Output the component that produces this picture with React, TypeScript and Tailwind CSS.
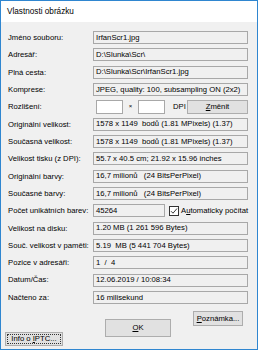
const rows: { label: string; value?: string; kind?: "res" | "count" }[] = [
  { label: "Jméno souboru:", value: "IrfanScr1.jpg" },
  { label: "Adresář:", value: "D:\\Slunka\\Scr\\" },
  { label: "Plná cesta:", value: "D:\\Slunka\\Scr\\IrfanScr1.jpg" },
  { label: "Komprese:", value: "JPEG, quality: 100, subsampling ON (2x2)" },
  { label: "Rozlišení:", kind: "res" },
  { label: "Originální velikost:", value: "1578 x 1149  bodů (1.81 MPixels) (1.37)" },
  { label: "Současná velikost:", value: "1578 x 1149  bodů (1.81 MPixels) (1.37)" },
  { label: "Velikost tisku (z DPI):", value: "55.7 x 40.5 cm; 21.92 x 15.96 inches" },
  { label: "Originální barvy:", value: "16,7 milionů   (24 BitsPerPixel)" },
  { label: "Současné barvy:", value: "16,7 milionů   (24 BitsPerPixel)" },
  { label: "Počet unikátních barev:", kind: "count" },
  { label: "Velikost na disku:", value: "1.20 MB (1 261 596 Bytes)" },
  { label: "Souč. velikost v paměti:", value: "5.19  MB (5 441 704 Bytes)" },
  { label: "Pozice v adresáři:", value: "1  /  4" },
  { label: "Datum/Čas:", value: "12.06.2019 / 10:08:34" },
  { label: "Načteno za:", value: "16 milisekund" },
];

const Box = ({ children, className = "" }: { children?: React.ReactNode; className?: string }) => (
  <div
    className={`h-[13px] border border-[#a8a8a8] bg-[#f0f0f0] pl-[2px] flex items-center whitespace-pre leading-none ${className}`}
  >
    {children}
  </div>
);

const Btn = ({ children, className = "" }: { children: React.ReactNode; className?: string }) => (
  <div className={`border border-[#adadad] bg-[#e1e1e1] flex items-center justify-center leading-none ${className}`}>
    {children}
  </div>
);

export default function App() {
  return (
    <div
      className="w-[258px] h-[350px] border border-[#2f86d0] flex flex-col text-[7.7px] text-black"
      style={{ fontFamily: '"Liberation Sans", Arial, sans-serif' }}
    >
      <div className="h-[21px] bg-white flex items-center pl-[6px] text-[8.2px] pt-[1px]">Vlastnosti obrázku</div>
      <div className="flex-1 bg-[#f0f0f0] flex flex-col pt-[7px]">
        <div className="flex flex-col pl-[7px] pr-[9px]">
          {rows.map((r) => (
            <div key={r.label} className="h-[17.33px] flex items-center">
              <div className="w-[85px] shrink-0 whitespace-nowrap">{r.label}</div>
              {r.value !== undefined && <Box className="flex-1">{r.value}</Box>}
              {r.kind === "res" && (
                <div className="flex-1 flex items-center">
                  <div className="ml-[3px] w-[27px] h-[14px] border border-[#a8a8a8] bg-white" />
                  <span className="w-[15px] text-center text-[6px]">×</span>
                  <div className="w-[27px] h-[14px] border border-[#a8a8a8] bg-white" />
                  <span className="ml-[8px] w-[12px]">DPI</span>
                  <Btn className="ml-[2px] flex-1 h-[14px]">
                    <span>
                      <span className="underline">Z</span>měnit
                    </span>
                  </Btn>
                </div>
              )}
              {r.kind === "count" && (
                <div className="flex-1 flex items-center">
                  <Box className="w-[72px]">45264</Box>
                  <div className="ml-[4px] w-[10px] h-[10px] border border-[#333] bg-white flex items-center justify-center">
                    <svg width="8" height="8" viewBox="0 0 8 8">
                      <path d="M1 4.2 L3 6.2 L7 1.5" fill="none" stroke="#222" strokeWidth="0.9" />
                    </svg>
                  </div>
                  <span className="ml-[2px] whitespace-nowrap">
                    A<span className="underline">u</span>tomaticky počítat
                  </span>
                </div>
              )}
            </div>
          ))}
        </div>
        <div className="flex-1 flex pl-[4px]">
          <Btn className="self-start mt-[26px] w-[58px] h-[14px] border-[#0078d7]">
            <span className="border border-dotted border-[#333] px-[3px] h-[10px] flex items-center">
              Info o&nbsp;<span className="underline">I</span>PTC...
            </span>
          </Btn>
          <Btn className="self-start mt-[13px] ml-[42px] w-[66px] h-[18px]">
            <span>
              <span className="underline">O</span>K
            </span>
          </Btn>
          <Btn className="self-start mt-[5px] ml-[22px] w-[50px] h-[15px]">
            <span>
              <span className="underline">P</span>oznámka...
            </span>
          </Btn>
        </div>
      </div>
    </div>
  );
}
